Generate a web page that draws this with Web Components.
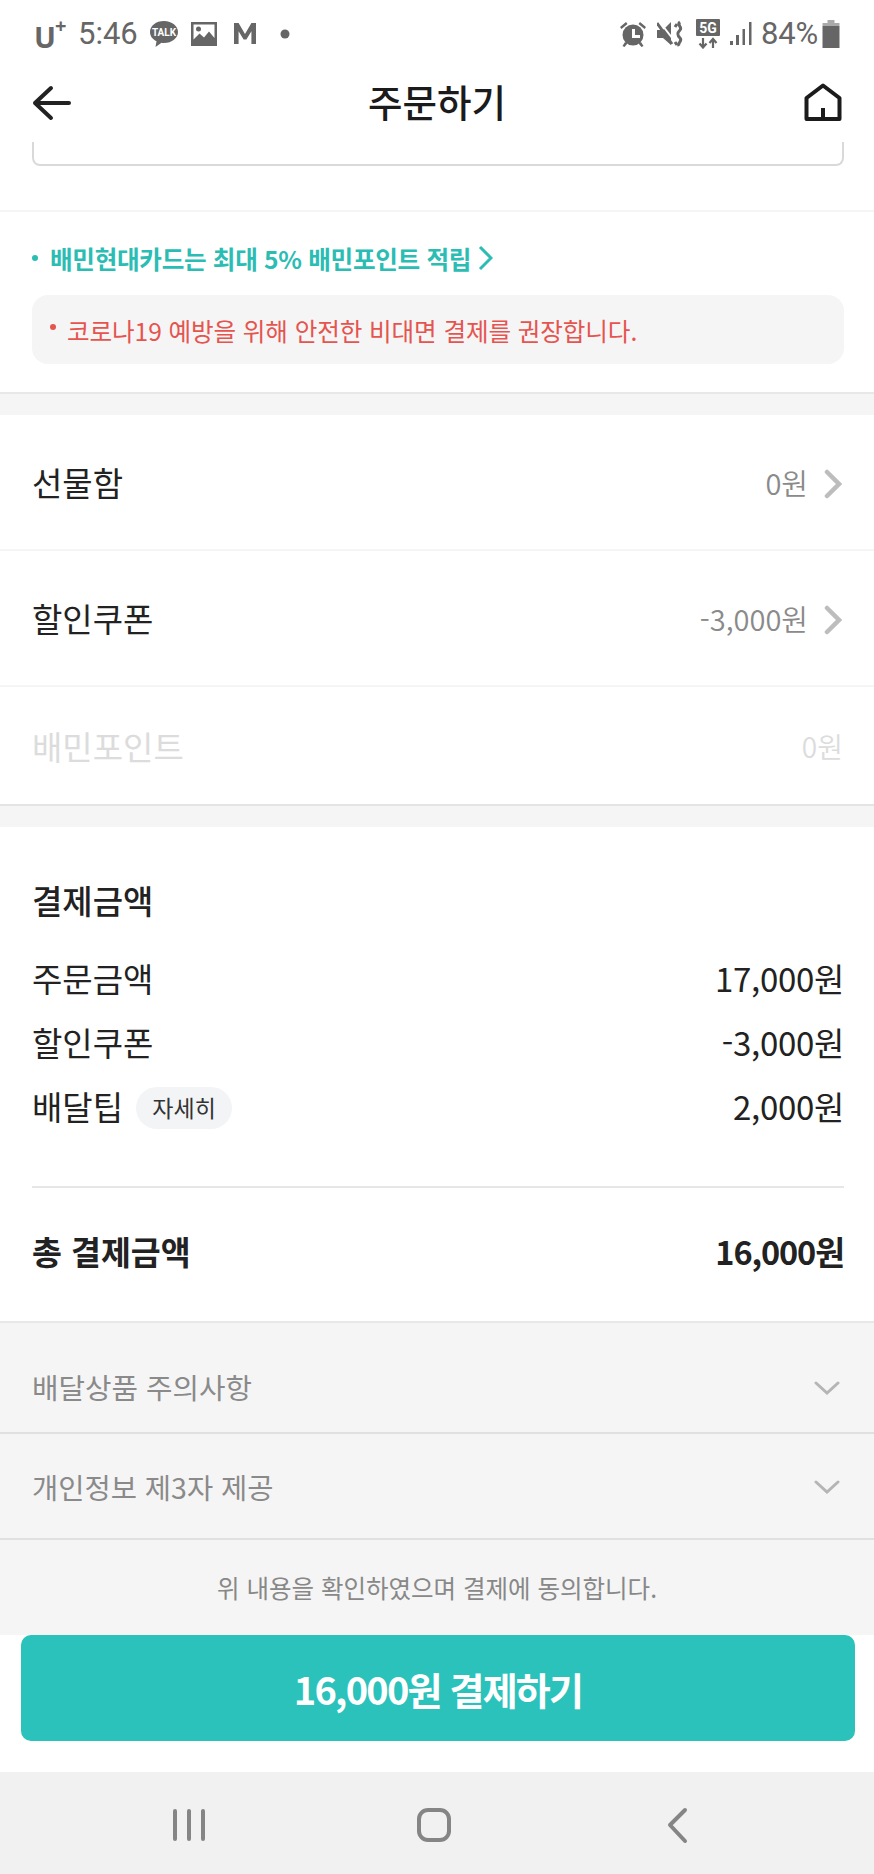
<!DOCTYPE html>
<html lang="ko"><head><meta charset="utf-8"><title>주문하기</title>
<style>
html,body{margin:0;padding:0;background:#fff}
body{width:874px;height:1874px;overflow:hidden;font-family:"Noto Sans CJK KR","Noto Sans",sans-serif;color:#222;display:flex;flex-direction:column}
</style></head><body>
<status-bar></status-bar>
<app-header></app-header>
<notice-block></notice-block>
<band-gap></band-gap>
<option-row label="선물함" value="0원" arrow></option-row>
<option-row label="할인쿠폰" value="-3,000원" arrow></option-row>
<option-row label="배민포인트" value="0원" disabled last></option-row>
<band-gap></band-gap>
<pay-summary></pay-summary>
<terms-panel></terms-panel>
<pay-button>16,000원 결제하기</pay-button>
<nav-bar></nav-bar>
<script>
function def(name,html,init){customElements.define(name,class extends HTMLElement{constructor(){super();this.attachShadow({mode:'open'}).innerHTML=html;}connectedCallback(){if(init)init.call(this,this.shadowRoot)}})}
def('status-bar',`<style>
:host{display:flex;align-items:center;height:64px;box-sizing:border-box;padding:3px 34px 0 34px;color:#666;font-family:Roboto,sans-serif;font-size:31px;flex:none}
.l,.r{display:flex;align-items:center}.r{margin-left:auto}
.u{font-family:"Open Sans",sans-serif;font-weight:700;font-size:29px;position:relative;top:3px;width:31px}
.p{position:absolute;left:21px;top:-5px;font-size:20px}
svg{display:block;fill:#666}
</style>
<div class="l"><span class="u">U<span class="p">+</span></span><span style="margin-left:13px">5:46</span>
<svg style="margin-left:11px" width="30" height="28" viewBox="0 0 30 28"><path d="M15 1C7 1 1 5.800 1 12c0 4 2.600 7.400 6.500 9.300L6.500 27l6-4.200c.8.100 1.700.200 2.500.200 8 0 14-5 14-11S23 1 15 1z"/><text x="15" y="16" text-anchor="middle" font-family="Roboto" font-size="10" font-weight="700" fill="#fff">TALK</text></svg>
<svg style="margin-left:12px" width="26" height="24" viewBox="0 0 26 24"><path fill-rule="evenodd" d="M0 0h26v24H0zM2.500 2.500v15l6-6 4.500 4 5-6 5.500 6.500v-13.500z"/><circle cx="7.500" cy="7" r="2.500"/></svg>
<svg style="margin-left:17px" width="22" height="23" viewBox="0 0 24 23"><path d="M0 0h5l7 12 7-12h5v23h-5V9l-5.500 9h-3L5 9v14H0z"/></svg>
<svg style="margin-left:24px" width="10" height="10"><circle cx="5" cy="5" r="4.500"/></svg></div>
<div class="r">
<svg width="28" height="28" viewBox="0 0 28 28"><circle cx="14" cy="15" r="10.500"/><path d="M1 7l6-5 1.500 2-6 5zM27 7l-6-5-1.500 2 6 5zM6 22l-2.500 4 2 1 3-3.500zM22 22l2.500 4-2 1-3-3.500z"/><path d="M13 9h3v6h5v3h-8z" fill="#fff"/></svg>
<svg style="margin-left:10px" width="28" height="28" viewBox="0 0 28 28"><path d="M0 10h6l8-8v23l-8-7H0z"/><path d="M2 1l17 22" stroke="#fff" stroke-width="2"/><path d="M0 3l15 21" stroke="#666" stroke-width="3"/><path d="M23 2c-4 3 3 5 0 8s-3 5 0 8-3 5-1 8" stroke="#666" stroke-width="3" fill="none"/><path d="M18 7l2-3M18 22l2 3" stroke="#666" stroke-width="3"/></svg>
<svg style="margin-left:11px" width="24" height="30" viewBox="0 0 24 30"><path fill-rule="evenodd" d="M1 0h22a1 1 0 0 1 1 1v15a1 1 0 0 1-1 1H1a1 1 0 0 1-1-1V1a1 1 0 0 1 1-1z"/><text x="12" y="14" text-anchor="middle" font-family="Roboto" font-size="14" font-weight="700" fill="#fff">5G</text><path d="M7 19v9M3.500 24.500 7 28.500l3.500-4M17 29v-9M13.500 24 17 20l3.500 4" stroke="#666" stroke-width="2.200" fill="none"/></svg>
<svg style="margin-left:10px" width="22" height="25" viewBox="0 0 22 25"><path d="M0 20h3v4H0zM6 14h3v10H6zM12.500 8h2.500v16h-2.500zM19 1h2.500v23H19z"/></svg>
<span style="margin-left:9px;letter-spacing:-.2px">84%</span>
<svg style="margin-left:4px" width="18" height="28" viewBox="0 0 17 28"><path d="M5 0h7v3H5z" fill="#aaa"/><path d="M0 3h17v3H0z" fill="#aaa"/><path d="M0 6h17v22H0z"/></svg>
</div>`);
def('app-header',`<style>
:host{display:flex;align-items:center;justify-content:space-between;height:78px;padding:0 32px 0 32px;flex:none;position:relative;box-sizing:border-box}
h1{margin:0;font-size:37.500px;font-weight:500;color:#1b1b1b;position:absolute;left:0;right:0;text-align:center;line-height:73px;top:0}
svg{display:block;position:relative}
</style>
<svg width="40" height="36" viewBox="0 0 40 36" fill="none" stroke="#222" stroke-width="4" stroke-linecap="round" stroke-linejoin="round"><path d="M19 3 3 18l16 15M3 18h34"/></svg>
<h1>주문하기</h1>
<svg style="top:-1px" width="38" height="38" viewBox="0 0 38 38" fill="none" stroke="#1b1b1b" stroke-width="4" stroke-linejoin="round"><path d="M2.500 36V15L19 2.500 35.500 15v21zM19 36V25"/></svg>`);
def('notice-block',`<style>
:host{display:block;flex:none;height:252px;box-sizing:border-box;border-bottom:2px solid #e8e8e8}
.card{margin:0 30px 0 32px;height:24px;box-sizing:border-box;border:2px solid #d9d9d9;border-top:0;border-radius:0 0 8px 8px}
.sep{height:2px;background:#f5f5f5;margin-top:44px}
.teal{display:flex;align-items:center;margin:26px 32px 0;height:40px;color:#2bbdb4;font-size:24.600px;font-weight:700;letter-spacing:-.3px}
.d{width:6px;height:6px;border-radius:50%;background:currentColor;margin-right:12px}
.red{margin:17px 30px 0 32px;height:69px;border-radius:16px;background:#f5f5f5;display:flex;align-items:center;padding-left:18px;color:#e5544f;font-size:24.600px;letter-spacing:-.1px}
.red .d{margin-right:11px;margin-top:-6px}
svg{margin-left:7px}
</style>
<div class="card"></div><div class="sep"></div>
<div class="teal"><span class="d"></span>배민현대카드는 최대 5% 배민포인트 적립<svg width="15" height="26" viewBox="0 0 15 26" fill="none" stroke="#2bbdb4" stroke-width="3"><path d="M2 2l11 11L2 24"/></svg></div>
<div class="red"><span class="d"></span>코로나19 예방을 위해 안전한 비대면 결제를 권장합니다.</div>`);
def('band-gap',`<style>:host{display:block;height:21px;background:#f5f5f5;flex:none}</style>`);
def('option-row',`<style>
:host{display:flex;align-items:center;flex:none;height:136px;padding:0 32px 0 32px;box-sizing:border-box;border-bottom:2px solid #f5f5f5;font-size:33px;color:#222}
:host([disabled]){height:119px;color:#dcdcdc;border-bottom-color:#e4e4e4;padding-right:31px}
.v{margin-left:auto;font-size:29px;color:#8a8a8a;font-weight:350}
:host([disabled]) .v{font-size:28px;color:#dcdcdc}
svg{margin-left:16px;display:none;position:relative;top:2px}
:host([arrow]) svg{display:block}
.l,.v{position:relative;top:0}
</style><span class="l"></span><span class="v"></span>
<svg width="18" height="30" viewBox="0 0 18 30" fill="none" stroke="#bdbdbd" stroke-width="4.500" stroke-linecap="round"><path d="M3 3l12 12L3 27"/></svg>`,function(s){s.querySelector('.l').textContent=this.getAttribute('label');s.querySelector('.v').textContent=this.getAttribute('value')});
def('pay-summary',`<style>
:host{display:block;flex:none;height:494px;box-sizing:border-box;padding:0 30px 0 32px;font-size:33px;color:#222}
h2{margin:0;font-size:33px;font-weight:500;line-height:48px;padding-top:49px}
.r{display:flex;align-items:center;justify-content:space-between;height:64px}
.r span:last-child{letter-spacing:-.3px}
.rows{margin-top:22px}
.chip{display:inline-block;margin-left:13px;width:96px;height:42px;border-radius:21px;background:#f3f4f6;font-size:23px;line-height:40px;text-align:center;color:#333;vertical-align:3px;letter-spacing:0!important}
hr{border:0;height:2px;background:#e6e6e6;margin:48px 0 0}
.t{font-weight:700;height:64px;margin-top:30px;color:#222;font-size:32.500px}
.r.t span:last-child{letter-spacing:-1.100px}
</style><h2>결제금액</h2>
<div class="rows"><div class="r"><span>주문금액</span><span>17,000원</span></div>
<div class="r"><span>할인쿠폰</span><span>-3,000원</span></div>
<div class="r"><span>배달팁<span class="chip">자세히</span></span><span>2,000원</span></div></div>
<hr><div class="r t"><span>총 결제금액</span><span>16,000원</span></div>`);
def('terms-panel',`<style>
:host{display:block;flex:none;height:314px;background:#f5f5f5;border-top:2px solid #e8e8e8;box-sizing:border-box;color:#8a8a8a;font-size:28.800px}
.f{display:flex;align-items:center;justify-content:space-between;padding:18px 32px 0;height:111px;border-bottom:2px solid #e0e0e0;box-sizing:border-box}
.f+.f{height:106px;padding:0 32px}
.f+.f span{font-size:28.500px}
p{margin:0;text-align:center;font-size:24.500px;line-height:95px;color:#888}
svg{position:relative;left:-2px;top:1px}
</style>
<div class="f"><span>배달상품 주의사항</span><svg width="26" height="14" viewBox="0 0 26 14" fill="none" stroke="#b5b5b5" stroke-width="3" stroke-linecap="round"><path d="M2 2l11 10L24 2"/></svg></div>
<div class="f"><span>개인정보 제3자 제공</span><svg width="26" height="14" viewBox="0 0 26 14" fill="none" stroke="#b5b5b5" stroke-width="3" stroke-linecap="round"><path d="M2 2l11 10L24 2"/></svg></div>
<p>위 내용을 확인하였으며 결제에 동의합니다.</p>`);
def('pay-button',`<style>
:host{display:block;flex:none;height:137px;box-sizing:border-box;padding:0 19px 31px 21px}
div{height:106px;background:#2bc2bb;border-radius:10px;color:#fff;font-size:38px;font-weight:700;display:flex;align-items:center;justify-content:center;letter-spacing:-1.800px}
</style><div><slot></slot></div>`);
def('nav-bar',`<style>
:host{display:block;flex:none;height:102px;background:#f1f1f1;position:relative}
svg{position:absolute;fill:none;stroke:#858585;stroke-width:4;stroke-linecap:round;stroke-linejoin:round}
</style>
<svg style="left:172px;top:36px" width="34" height="34" viewBox="0 0 34 34"><path d="M3 3v28M17 3v28M31 3v28"/></svg>
<svg style="left:415px;top:34px" width="38" height="38" viewBox="0 0 38 38"><rect x="4" y="4" width="30" height="30" rx="9"/></svg>
<svg style="left:665px;top:34px" width="26" height="38" viewBox="0 0 26 38"><path d="M20 4 5 19l15 16"/></svg>`);
</script>
</body></html>
